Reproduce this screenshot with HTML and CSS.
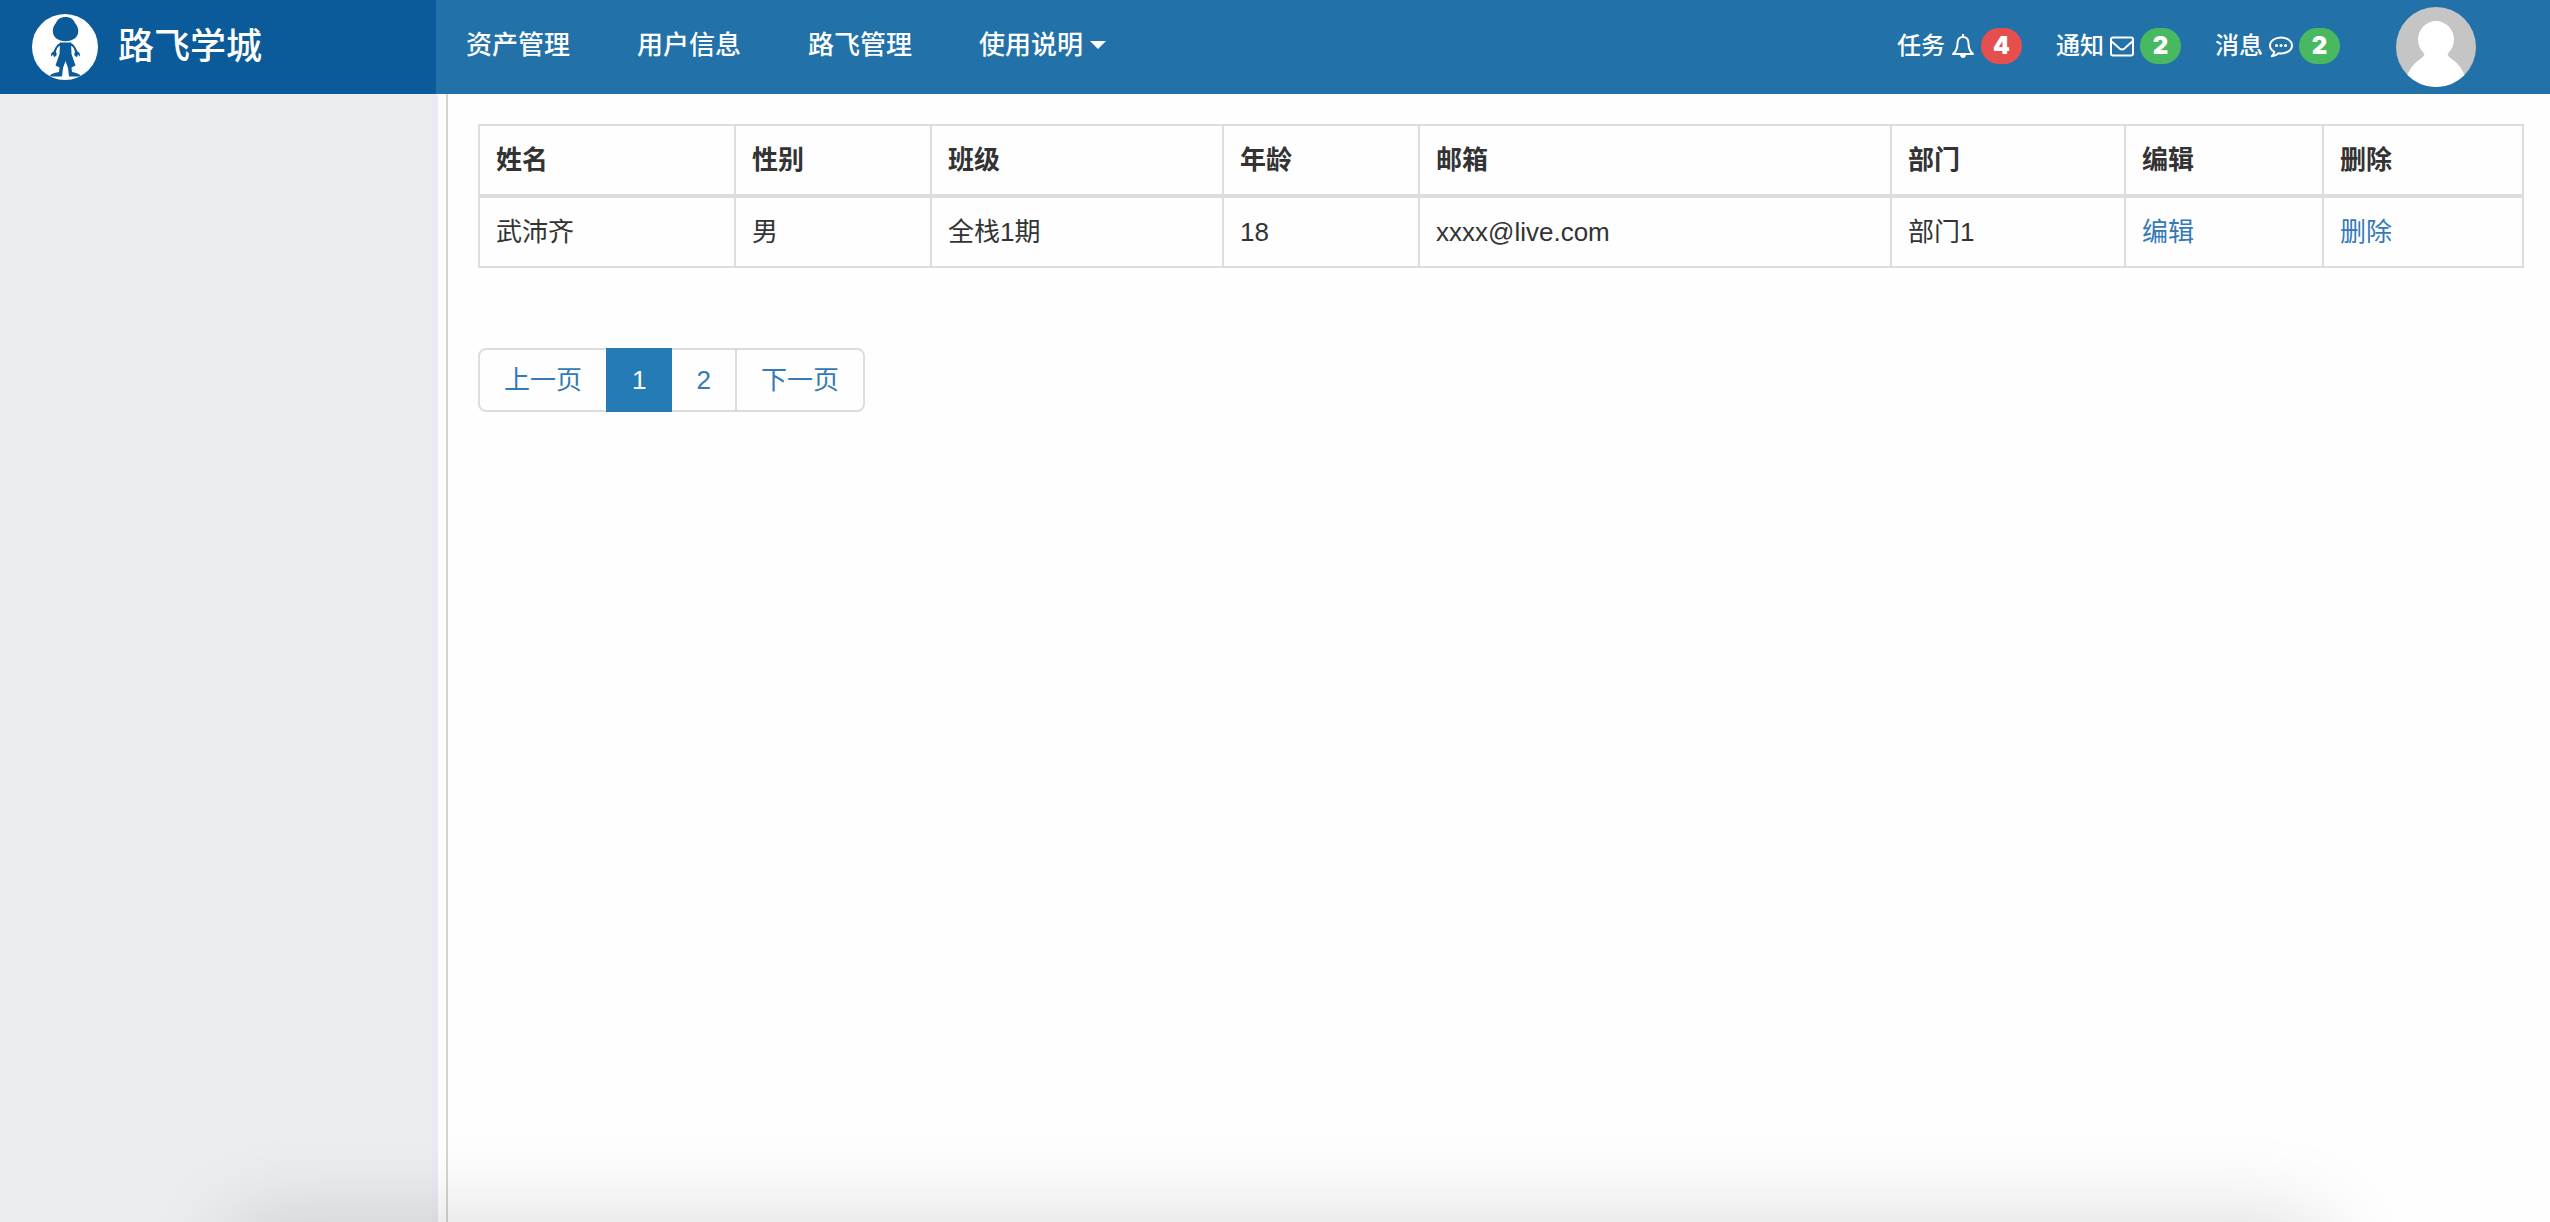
FILE: index.html
```html
<!DOCTYPE html>
<html lang="zh-CN">
<head>
  <meta charset="utf-8">
  <title>路飞学城</title>
  <link rel="stylesheet" href="styles.css">
</head>
<body>
  <header class="header">
    <a class="brand" href="#">
      <svg class="brand-logo" viewBox="0 0 66 66" aria-hidden="true">
        <circle cx="33" cy="33" r="33" fill="#fff"/>
        <g fill="#0b5a9a">
          <path d="M33.500 3C29 3 25.500 5 24 9C22 11 20.800 14 20.800 17C20.800 23 26 27.300 33.500 27.300S46.300 23 46.300 17C46.300 14 45 11 43 9C41.500 5 38 3 33.500 3Z"/>
          <path d="M28 28.500H39L39.500 40L43.500 51.500L39.500 53.500L40 58C43 58.500 47 59.500 48.500 61.500L47 62.500H37L36 54L33.500 47L31 54L30 62.500H19.500L18 61.500C19.500 59.500 24 58.500 27 58L27.500 53.500L23.500 51.500L27.500 40Z"/>
          <path d="M29 28.500C25 30 23 34 21.500 37.500C19 38.500 18.500 41 19.500 42.500L21 40.500L22 43C24.500 42.500 25.500 40.500 24 38C24.500 35 26 32 29 31.500Z"/>
          <path d="M38 28.500C42 30 44 34 45.500 37.500C48 38.500 48.500 41 47.500 42.500L46 40.500L45 43C42.500 42.500 41.500 40.500 43 38C42.500 35 41 32 38 31.500Z"/>
        </g>
      </svg>
      <span>路飞学城</span>
    </a>
    <nav class="nav">
      <a href="#">资产管理</a>
      <a href="#">用户信息</a>
      <a href="#">路飞管理</a>
      <a href="#">使用说明<span class="caret"></span></a>
    </nav>
    <div class="tools">
      <a class="notice" href="#">任务
        <svg class="icon" viewBox="0 0 24 24" aria-hidden="true"><path d="M12 0V3M12 3C8 3 6.500 6 6.500 9.500C6.500 14.500 5 17.500 2 20H22C19 17.500 17.500 14.500 17.500 9.500C17.500 6 16 3 12 3Z"/><path fill="#fff" stroke="none" d="M9 20.500H15C15 22.500 13.700 24 12 24S9 22.500 9 20.500Z"/></svg>
        <span class="badge badge-danger">4</span>
      </a>
      <a class="notice" href="#">通知
        <svg class="icon" viewBox="0 0 24 24" aria-hidden="true"><rect x="1" y="3.500" width="22" height="18" rx="2"/><path d="M1 7C4 9.500 7 12 9.500 14.500C11 15.700 13 15.700 14.500 14.500C17 12 20 9.500 23 7"/></svg>
        <span class="badge badge-success">2</span>
      </a>
      <a class="notice" href="#">消息
        <svg class="icon" viewBox="0 0 24 24" aria-hidden="true"><path d="M12 3.500C6 3.500 1 7 1 11.500C1 14 2.700 16.300 5.300 17.800C5 19.500 4 21 2.800 22.300C5.500 22 7.800 20.800 9.500 19.200C17 20.300 23 16.500 23 11.500C23 7 18 3.500 12 3.500Z"/><path class="dots" d="M7.500 11.500H7.600M12 11.500H12.100M16.500 11.500H16.600"/></svg>
        <span class="badge badge-success">2</span>
      </a>
      <a class="avatar" href="#" aria-label="用户">
        <svg viewBox="0 0 80 80" aria-hidden="true">
          <defs><clipPath id="round"><circle cx="40" cy="40" r="40"/></clipPath></defs>
          <g clip-path="url(#round)">
            <rect width="80" height="80" fill="#c5c5c5"/>
            <ellipse cx="40" cy="32.500" rx="18" ry="18.500" fill="#fff"/>
            <path fill="#fff" d="M29 42H51C51 49 53 50 57 53C63 57 67 63 70 72V80H10V72C13 63 17 57 23 53C27 50 29 49 29 42Z"/>
          </g>
        </svg>
      </a>
    </div>
  </header>
  <div class="layout">
    <aside class="sidebar"></aside>
    <main class="content">
      <table class="table">
        <colgroup>
          <col class="col-name"><col class="col-small"><col class="col-class"><col class="col-small">
          <col class="col-email"><col class="col-dept"><col class="col-edit"><col class="col-delete">
        </colgroup>
        <thead>
          <tr><th>姓名</th><th>性别</th><th>班级</th><th>年龄</th><th>邮箱</th><th>部门</th><th>编辑</th><th>删除</th></tr>
        </thead>
        <tbody>
          <tr><td>武沛齐</td><td>男</td><td>全栈1期</td><td>18</td><td>xxxx@live.com</td><td>部门1</td><td><a href="#">编辑</a></td><td><a href="#">删除</a></td></tr>
        </tbody>
      </table>
      <nav class="pagination" aria-label="分页">
        <a href="#">上一页</a>
        <a class="active" href="#" aria-current="page">1</a>
        <a href="#">2</a>
        <a href="#">下一页</a>
      </nav>
    </main>
  </div>
</body>
</html>
```
FILE: styles.css
```css
* {
  box-sizing: border-box;
}

body {
  display: flex;
  flex-direction: column;
  min-height: 100vh;
  margin: 0;
  background: #fefefe;
  color: #333;
  font: 26px/36px "Liberation Sans", "Noto Sans CJK SC", sans-serif;
}

/* Soft shadow rising from the lower edge of the window */
body::after {
  content: "";
  position: fixed;
  top: 100%;
  left: 230px;
  right: 230px;
  height: 200px;
  box-shadow: 0 0 90px rgba(0, 0, 0, 0.15);
  pointer-events: none;
}

a {
  color: #337ab7;
  text-decoration: none;
}

.header {
  display: flex;
  height: 94px;
  background: #2272a9;
  font-weight: 500;
}

.header a {
  color: #fff;
}

.brand {
  display: flex;
  align-items: center;
  gap: 20px;
  width: 436px;
  padding-left: 32px;
  background: #0b5a9a;
  font-size: 36px;
}

.brand-logo {
  width: 66px;
  height: 66px;
}

.nav {
  display: flex;
  align-items: center;
  gap: 67px;
  padding: 0 0 4px 30px;
}

.nav a {
  display: flex;
  align-items: center;
}

.caret {
  margin-left: 7px;
  border: 8px solid transparent;
  border-top-color: #fff;
  border-bottom: 0;
}

.tools {
  display: flex;
  align-items: center;
  gap: 34px;
  margin-left: auto;
  padding-right: 74px;
  font-size: 24px;
}

.notice {
  display: flex;
  align-items: center;
  gap: 6px;
  padding-bottom: 2px;
}

.icon {
  width: 24px;
  height: 24px;
  fill: none;
  stroke: #fff;
  stroke-width: 2;
  stroke-linejoin: round;
}

.dots {
  stroke-width: 3;
  stroke-linecap: round;
}

.badge {
  width: 41px;
  border-radius: 18px;
  font-family: Inter, "Liberation Sans", sans-serif;
  font-weight: 900;
  text-align: center;
}

.badge-danger {
  background: #e5504f;
}

.badge-success {
  background: #48b960;
}

.avatar {
  margin-left: 22px;
}

.avatar svg {
  display: block;
  width: 80px;
  height: 80px;
}

.layout {
  display: flex;
  flex: 1;
}

.sidebar {
  width: 438px;
  border-right: 6px solid #ebe9f3;
  background: #eaeef1;
}

.content {
  flex: 1;
  margin-left: 8px;
  padding: 30px 26px 30px 30px;
  border-left: 2px solid #d4d4d4;
}

.table {
  width: 100%;
  margin-bottom: 80px;
  border-collapse: collapse;
  table-layout: fixed;
}

.col-name { width: 256px; }
.col-small { width: 196px; }
.col-class { width: 292px; }
.col-email { width: 472px; }
.col-dept { width: 234px; }
.col-edit { width: 198px; }
.col-delete { width: 200px; }

.table th,
.table td {
  padding: 16px;
  border: 2px solid #ddd;
  text-align: left;
}

.table th {
  border-bottom-width: 4px;
  font-weight: 700;
}

.pagination {
  display: flex;
}

.pagination a {
  margin-left: -2px;
  padding: 12px 24px;
  border: 2px solid #ddd;
}

.pagination a:first-child {
  margin-left: 0;
  border-radius: 8px 0 0 8px;
}

.pagination a:last-child {
  border-radius: 0 8px 8px 0;
}

.pagination .active {
  z-index: 1;
  border-color: #257bb5;
  background: #257bb5;
  color: #fff;
}
```
